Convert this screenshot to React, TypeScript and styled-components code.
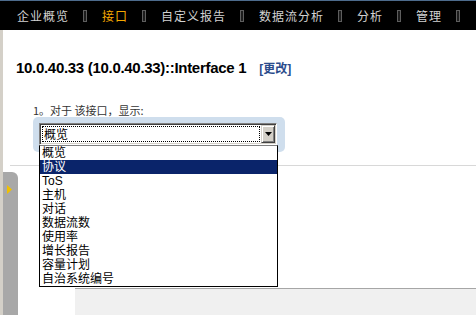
import * as React from 'react';
import styled, { createGlobalStyle } from 'styled-components';

const GlobalStyle = createGlobalStyle`
  html, body {
    margin: 0;
    padding: 0;
    background: #fff;
  }
  body {
    font-family: "Liberation Sans", "Noto Sans CJK SC", sans-serif;
  }
`;

const Page = styled.div`
  width: 476px;
  height: 315px;
  display: flex;
  flex-direction: column;
  overflow: hidden;
`;

const TopNav = styled.nav`
  height: 29px;
  flex: none;
  border-top: 1px solid #4d6b8c;
  background: #000;
  display: flex;
  align-items: center;
  gap: 15px;
  padding-left: 17px;
`;

const NavItem = styled.span<{ $active?: boolean }>`
  font-family: "Noto Sans CJK SC", sans-serif;
  font-size: 12px;
  letter-spacing: 1px;
  margin-right: -1px;
  color: ${(p) => (p.$active ? '#f5a800' : '#d2d2d2')};
  white-space: nowrap;
`;

const NavSep = styled.span`
  width: 2px;
  height: 10px;
  border: 1px solid #5e5e5e;
  background: #1c1c1c;
`;

const Body = styled.div`
  flex: 1;
  display: flex;
  flex-direction: column;
  border-left: 3px solid #d4d0c8;
`;

const Header = styled.div`
  display: flex;
  align-items: baseline;
  gap: 13px;
  padding: 29px 0 0 13px;
`;

const Title = styled.h1`
  margin: 0;
  font-family: "Liberation Sans", Arial, sans-serif;
  font-size: 15px;
  letter-spacing: -0.3px;
  font-weight: bold;
  color: #000;
`;

const EditLink = styled.a`
  font-family: "Liberation Sans", "Noto Sans CJK SC", sans-serif;
  font-size: 12px;
  font-weight: bold;
  color: #2b4c8c;
  text-decoration: none;
`;

const Form = styled.div`
  padding: 27px 0 0 30px;
`;

const Label = styled.div`
  font-family: "Noto Sans CJK SC", sans-serif;
  font-size: 11px;
  line-height: 14px;
  color: #333;
`;

const SelectFrame = styled.div`
  width: 238px;
  padding: 6px 8px 7px 6px;
  background: #cfdeed;
  border-radius: 5px;
`;

const Combo = styled.div`
  position: relative;
  height: 18px;
  display: flex;
  align-items: center;
  background: #fff;
  border: 1px solid;
  border-color: #808080 #fff #fff #808080;
  box-shadow: inset 1px 1px #404040, inset -1px -1px #d4d0c8;
  padding: 1px;
`;

const ComboValue = styled.div`
  flex: 1;
  height: 14px;
  margin: 0 1px;
  border: 1px dotted #000;
  font-family: "Noto Sans CJK SC", sans-serif;
  font-size: 12px;
  line-height: 14px;
  padding-left: 1px;
  color: #000;
`;

const ComboButton = styled.div`
  width: 12px;
  height: 16px;
  display: flex;
  align-items: center;
  justify-content: center;
  background: #d4d0c8;
  border: 1px solid;
  border-color: #d4d0c8 #404040 #404040 #d4d0c8;
  box-shadow: inset 1px 1px #fff, inset -1px -1px #808080;
`;

const ListBox = styled.ul`
  position: absolute;
  top: 100%;
  left: -1px;
  width: 237px;
  margin: 1px 0 0;
  padding: 0;
  list-style: none;
  background: #fff;
  border: 1px solid #000;
  border-top-color: #808080;
  z-index: 2;
`;

const ListOption = styled.li<{ $active?: boolean }>`
  height: 14px;
  line-height: 14px;
  padding-left: 2px;
  font-family: "Liberation Sans", "Noto Sans CJK SC", sans-serif;
  font-size: 12px;
  color: ${(p) => (p.$active ? '#fff' : '#000')};
  background: ${(p) => (p.$active ? '#0a246a' : 'transparent')};
`;

const Divider = styled.div`
  margin: 13px 0 0 7px;
  border-top: 1px solid #d8d8d8;
`;

const Lower = styled.div`
  flex: 1;
  display: flex;
`;

const SideTab = styled.div`
  width: 15px;
  margin-top: 6px;
  padding: 8px 0 0 4px;
  box-sizing: border-box;
  background: #a8a8a8;
  border-top-right-radius: 6px;
`;

const Main = styled.div`
  flex: 1;
  display: flex;
  flex-direction: column;
  justify-content: flex-end;
  padding-left: 57px;
`;

const BottomPanel = styled.div`
  height: 26px;
  background: #f0f0f0;
  border-top: 1px solid #a6a6a6;
`;

const navItems = ['企业概览', '接口', '自定义报告', '数据流分析', '分析', '管理'];
const options = ['概览', '协议', 'ToS', '主机', '对话', '数据流数', '使用率', '增长报告', '容量计划', '自治系统编号'];

export default function App() {
  return (
    <Page>
      <GlobalStyle />
      <TopNav>
        {navItems.map((n) => (
          <React.Fragment key={n}>
            <NavItem $active={n === '接口'}>{n}</NavItem>
            <NavSep />
          </React.Fragment>
        ))}
      </TopNav>
      <Body>
        <Header>
          <Title>10.0.40.33 (10.0.40.33)::Interface 1</Title>
          <EditLink href="#">[更改]</EditLink>
        </Header>
        <Form>
          <Label>1。对于 该接口，显示:</Label>
          <SelectFrame>
            <Combo>
              <ComboValue>概览</ComboValue>
              <ComboButton>
                <svg width="7" height="4" viewBox="0 0 7 4">
                  <path d="M0 0h7L3.5 4z" fill="#000" />
                </svg>
              </ComboButton>
              <ListBox>
                {options.map((o) => (
                  <ListOption key={o} $active={o === '协议'}>{o}</ListOption>
                ))}
              </ListBox>
            </Combo>
          </SelectFrame>
        </Form>
        <Divider />
        <Lower>
          <SideTab>
            <svg width="5" height="9" viewBox="0 0 5 9">
              <path d="M0 0l5 4.5L0 9z" fill="#f0c000" />
            </svg>
          </SideTab>
          <Main>
            <BottomPanel />
          </Main>
        </Lower>
      </Body>
    </Page>
  );
}
